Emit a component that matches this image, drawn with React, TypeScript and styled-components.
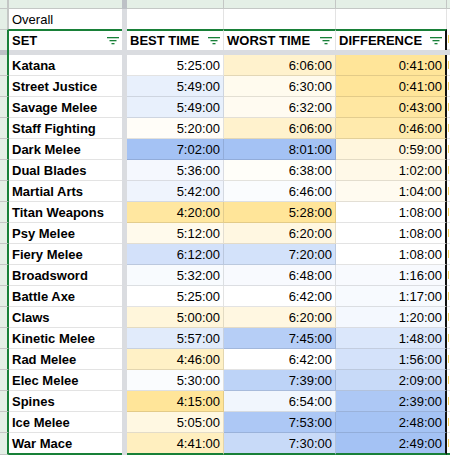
import React from "react";
import styled, { createGlobalStyle } from "styled-components";

const Global = createGlobalStyle`
  html, body { margin: 0; padding: 0; background: #fff; }
  body {
    width: 450px; height: 456px; overflow: hidden;
    font-family: "Liberation Sans", Arial, sans-serif;
    color: #000;
  }
`;

const GREEN = "#188038";
const HDR_BG = "#e4efe6";
const HDR_LINE = "#c4c7c5";
const GRID = "rgba(0,0,0,0.11)";
const FROZEN = "#dadce0";
const FROZEN_DARK = "#bdc1c6";

const Sheet = styled.div`
  display: flex;
  flex-direction: column;
  width: 450px;
  height: 456px;
  overflow: hidden;
`;

const Row = styled.div<{ $h: number }>`
  display: grid;
  grid-template-columns: 9px 113px 5px 97px 112px 111px 1fr;
  height: ${(p) => p.$h}px;
  flex: none;
`;

const Cell = styled.div`
  box-sizing: border-box;
  min-width: 0;
  overflow: hidden;
  white-space: nowrap;
  font-size: 13px;
  display: flex;
  align-items: center;
`;

const StripCell = styled(Cell)<{ $line?: string }>`
  background: ${HDR_BG};
  border-bottom: 1px solid ${HDR_LINE};
  border-right: ${(p) => (p.$line ? `1px solid ${p.$line}` : "none")};
`;

const RowHead = styled(Cell)<{ $edge: string; $top?: boolean; $bottom?: boolean }>`
  background: ${HDR_BG};
  border-right: 2px solid ${(p) => p.$edge};
  border-top: ${(p) => (p.$top ? `1px solid ${HDR_LINE}` : "none")};
  border-bottom: ${(p) => (p.$bottom ? `1px solid ${HDR_LINE}` : "none")};
`;

const FrozenV = styled.div<{ $dark?: boolean }>`
  background: ${(p) => (p.$dark ? FROZEN_DARK : FROZEN)};
`;

const FrozenH = styled.div<{ $dark?: boolean; $edge?: boolean }>`
  box-sizing: border-box;
  background: ${(p) => (p.$dark ? FROZEN_DARK : FROZEN)};
  border-right: ${(p) => (p.$edge ? `2px solid ${GREEN}` : "none")};
`;

const Plain = styled(Cell)<{ $right?: boolean }>`
  background: #fff;
  padding-left: 3px;
  border-right: ${(p) => (p.$right ? `1px solid ${GRID}` : "none")};
`;

const HeadCell = styled(Cell)<{ $right?: string }>`
  border-top: 2px solid ${GREEN};
  border-right: ${(p) => p.$right ?? "none"};
  font-weight: bold;
  justify-content: space-between;
  padding: 0 3px 0 3px;
  background: #fff;
`;

const NameCell = styled(Cell)<{ $last?: boolean }>`
  font-weight: bold;
  padding-left: 3px;
  background: #fff;
  border-bottom: ${(p) => (p.$last ? `2px solid ${GREEN}` : `1px solid ${GRID}`)};
`;

const TimeCell = styled(Cell)<{ $right: string; $last?: boolean }>`
  justify-content: flex-end;
  padding-right: 3px;
  border-right: ${(p) => p.$right};
  border-bottom: ${(p) => (p.$last ? `2px solid ${GREEN}` : `1px solid ${GRID}`)};
`;

const Extra = styled(Cell)<{ $last?: boolean }>`
  background: #fff;
  padding-left: 1px;
  border-bottom: ${(p) => (p.$last ? `2px solid ${GREEN}` : `1px solid ${GRID}`)};
`;

const Mark = styled.span`
  display: block;
  width: 1px;
  height: 8px;
  background: #f3cf5e;
`;

const Filler = styled.div`
  flex: 1;
  background: #fff;
`;

const FilterIcon = () => (
  <svg width="12" height="8" viewBox="0 0 12 8" style={{ flex: "none" }}>
    <rect x="0" y="0" width="12" height="1.3" fill={GREEN} />
    <rect x="2.5" y="3" width="7" height="1.3" fill={GREEN} />
    <rect x="4.5" y="6" width="3" height="1.3" fill={GREEN} />
  </svg>
);

type Item = { name: string; best: string; worst: string; diff: string };

const DATA: Item[] = [
  { name: "Katana", best: "5:25:00", worst: "6:06:00", diff: "0:41:00" },
  { name: "Street Justice", best: "5:49:00", worst: "6:30:00", diff: "0:41:00" },
  { name: "Savage Melee", best: "5:49:00", worst: "6:32:00", diff: "0:43:00" },
  { name: "Staff Fighting", best: "5:20:00", worst: "6:06:00", diff: "0:46:00" },
  { name: "Dark Melee", best: "7:02:00", worst: "8:01:00", diff: "0:59:00" },
  { name: "Dual Blades", best: "5:36:00", worst: "6:38:00", diff: "1:02:00" },
  { name: "Martial Arts", best: "5:42:00", worst: "6:46:00", diff: "1:04:00" },
  { name: "Titan Weapons", best: "4:20:00", worst: "5:28:00", diff: "1:08:00" },
  { name: "Psy Melee", best: "5:12:00", worst: "6:20:00", diff: "1:08:00" },
  { name: "Fiery Melee", best: "6:12:00", worst: "7:20:00", diff: "1:08:00" },
  { name: "Broadsword", best: "5:32:00", worst: "6:48:00", diff: "1:16:00" },
  { name: "Battle Axe", best: "5:25:00", worst: "6:42:00", diff: "1:17:00" },
  { name: "Claws", best: "5:00:00", worst: "6:20:00", diff: "1:20:00" },
  { name: "Kinetic Melee", best: "5:57:00", worst: "7:45:00", diff: "1:48:00" },
  { name: "Rad Melee", best: "4:46:00", worst: "6:42:00", diff: "1:56:00" },
  { name: "Elec Melee", best: "5:30:00", worst: "7:39:00", diff: "2:09:00" },
  { name: "Spines", best: "4:15:00", worst: "6:54:00", diff: "2:39:00" },
  { name: "Ice Melee", best: "5:05:00", worst: "7:53:00", diff: "2:48:00" },
  { name: "War Mace", best: "4:41:00", worst: "7:30:00", diff: "2:49:00" },
];

const toMin = (t: string) => {
  const [h, m] = t.split(":").map(Number);
  return h * 60 + m;
};

const MIN_C = [255, 229, 153];
const MID_C = [255, 255, 255];
const MAX_C = [164, 194, 244];

const mix = (a: number[], b: number[], t: number) =>
  `rgb(${a.map((v, i) => Math.round(v + (b[i] - v) * t)).join(",")})`;

const scale = (values: number[]) => {
  const sorted = [...values].sort((a, b) => a - b);
  const min = sorted[0];
  const max = sorted[sorted.length - 1];
  const pos = (sorted.length - 1) * 0.5;
  const lo = Math.floor(pos);
  const mid = sorted[lo] + (sorted[Math.ceil(pos)] - sorted[lo]) * (pos - lo);
  return (v: number) => {
    if (v <= mid) {
      const t = mid === min ? 0 : (mid - v) / (mid - min);
      return mix(MID_C, MIN_C, t);
    }
    const t = max === mid ? 0 : (v - mid) / (max - mid);
    return mix(MID_C, MAX_C, t);
  };
};

const bestScale = scale(DATA.map((d) => toMin(d.best)));
const worstScale = scale(DATA.map((d) => toMin(d.worst)));
const diffScale = scale(DATA.map((d) => toMin(d.diff)));

const LINE = `1px solid ${GRID}`;
const BLACK = "2px solid #111";

export default function App() {
  return (
    <>
      <Global />
      <Sheet>
        <Row $h={9}>
          <RowHead $edge={HDR_LINE} $bottom />
          <StripCell />
          <FrozenV $dark />
          <StripCell $line={HDR_LINE} />
          <StripCell $line={HDR_LINE} />
          <StripCell $line={HDR_LINE} />
          <StripCell />
        </Row>
        <Row $h={20}>
          <RowHead $edge={HDR_LINE} />
          <Plain>Overall</Plain>
          <FrozenV />
          <Plain $right />
          <Plain $right />
          <Plain $right />
          <Plain />
        </Row>
        <Row $h={21}>
          <RowHead $edge={GREEN} $top />
          <HeadCell>
            <span>SET</span>
            <FilterIcon />
          </HeadCell>
          <FrozenV />
          <HeadCell $right={LINE}>
            <span>BEST TIME</span>
            <FilterIcon />
          </HeadCell>
          <HeadCell $right={LINE}>
            <span>WORST TIME</span>
            <FilterIcon />
          </HeadCell>
          <HeadCell $right={BLACK}>
            <span>DIFFERENCE</span>
            <FilterIcon />
          </HeadCell>
          <Extra>
            <Mark />
          </Extra>
        </Row>
        <Row $h={5}>
          <FrozenH $dark $edge />
          <FrozenH />
          <FrozenH />
          <FrozenH />
          <FrozenH />
          <FrozenH />
          <FrozenH />
        </Row>
        {DATA.map((d, i) => {
          const last = i === DATA.length - 1;
          return (
            <Row $h={last ? 22 : 21} key={d.name}>
              <RowHead $edge={GREEN} $bottom />
              <NameCell $last={last}>{d.name}</NameCell>
              <FrozenV />
              <TimeCell $right={LINE} $last={last} style={{ background: bestScale(toMin(d.best)) }}>
                {d.best}
              </TimeCell>
              <TimeCell $right={LINE} $last={last} style={{ background: worstScale(toMin(d.worst)) }}>
                {d.worst}
              </TimeCell>
              <TimeCell $right={BLACK} $last={last} style={{ background: diffScale(toMin(d.diff)) }}>
                {d.diff}
              </TimeCell>
              <Extra $last={last}>
                <Mark />
              </Extra>
            </Row>
          );
        })}
        <Filler />
      </Sheet>
    </>
  );
}
